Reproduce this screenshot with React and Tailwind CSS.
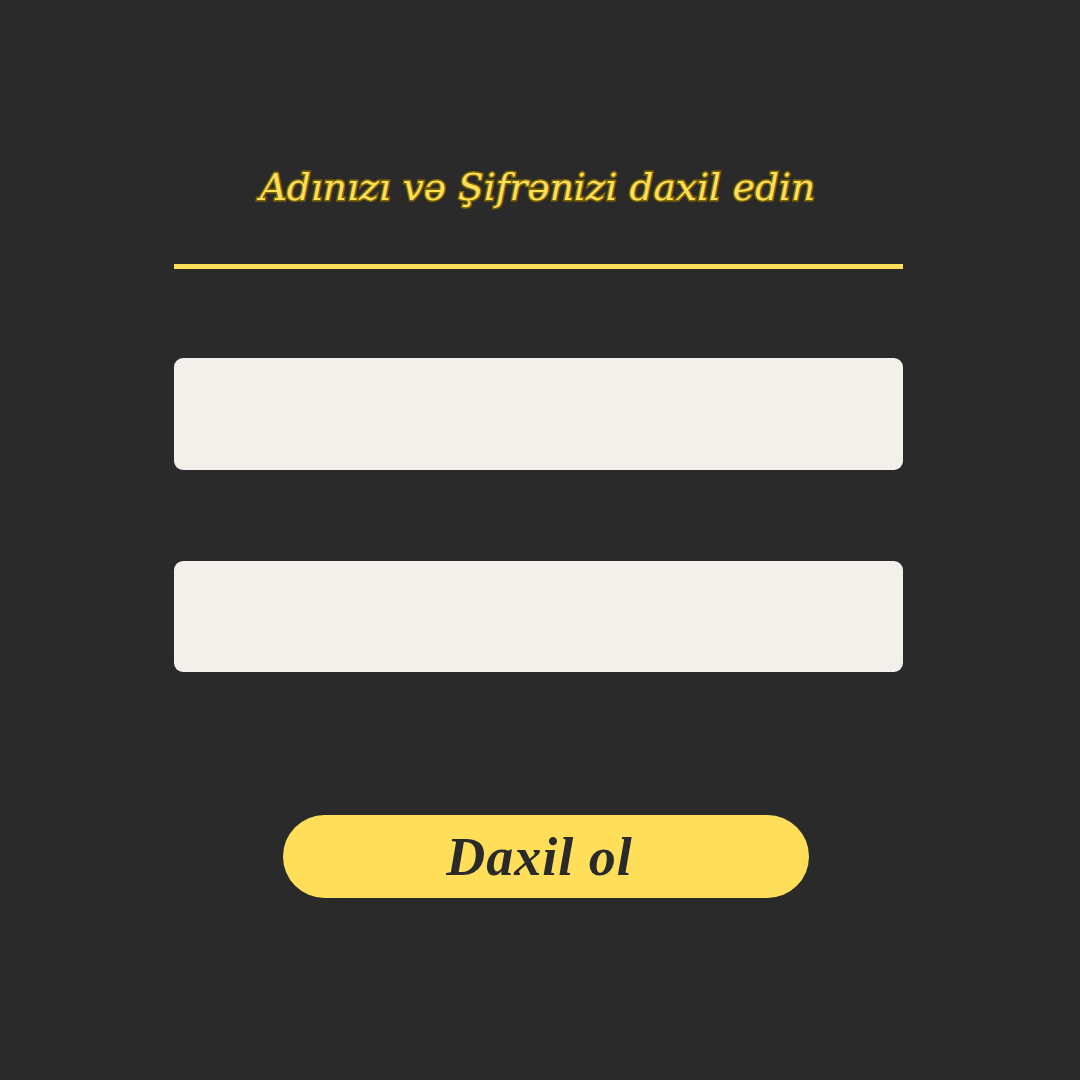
export default function App() {
  return (
    <div className="min-h-[1080px] w-full bg-[#2a2a2a]">
      <div className="flex w-[729px] flex-col ml-[174px] pt-[157px]">
        <h1
          className="h-[60px] whitespace-nowrap pr-[2px] text-center italic text-[37.5px] leading-[60px] text-[#ffde59] [paint-order:stroke_fill] [-webkit-text-stroke:3px_#7d6500]"
          style={{ fontFamily: '"DejaVu Serif", serif' }}
        >
          Adınızı və Şifrənizi daxil edin
        </h1>
        <div className="mt-[47px] h-[5px] w-full bg-[#ffde59]" />
        <div className="mt-[89px] h-[112px] w-full rounded-[9px] bg-[#f3f0eb]" />
        <div className="mt-[91px] h-[111px] w-full rounded-[9px] bg-[#f3f0eb]" />
        <button
          className="mt-[143px] ml-[109px] flex h-[83px] w-[526px] items-center justify-center rounded-full bg-[#ffde59] pr-[13px] text-[54px] leading-none font-bold italic tracking-[1px] text-[#2a2a2a]"
          style={{ fontFamily: '"Liberation Serif", serif' }}
        >
          Daxil ol
        </button>
      </div>
    </div>
  );
}
